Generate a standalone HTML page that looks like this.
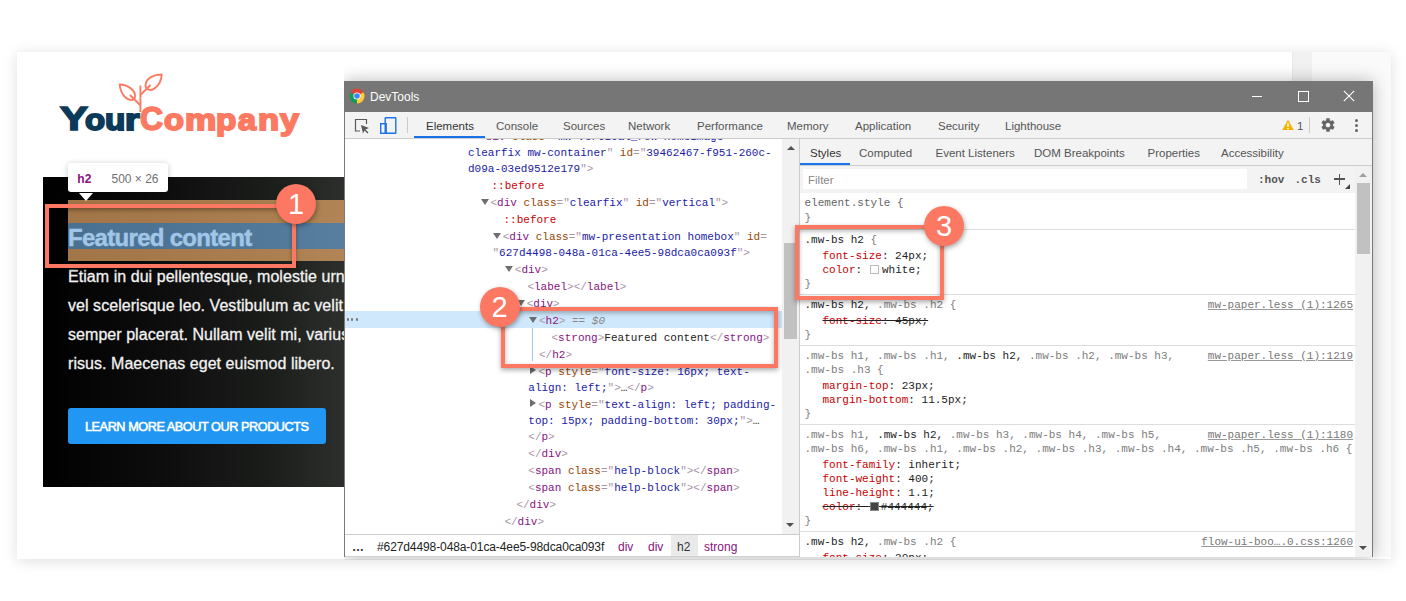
<!DOCTYPE html>
<html><head><meta charset="utf-8"><style>
html,body{margin:0;padding:0;}
body{width:1406px;height:601px;overflow:hidden;position:relative;background:#fff;}
.t{position:absolute;white-space:pre;line-height:20px;}
.clip{position:absolute;left:0;top:0;width:1406px;height:601px;}
</style></head><body>
<div style="position:absolute;left:17px;top:52px;width:1374px;height:507px;background:#fff;box-shadow:0 2px 14px rgba(0,0,0,0.13);"></div><div style="position:absolute;left:1292px;top:52px;width:1px;height:505px;background:#e8e8e8;"></div><div style="position:absolute;left:1293px;top:52px;width:19px;height:505px;background:#f1f1f1;"></div><div style="position:absolute;left:1312px;top:52px;width:79px;height:505px;background:#fafafa;"></div>
<div class="clip" style="clip-path:inset(0 1062px 0 0)"><svg style="position:absolute;left:110px;top:68px" width="65" height="50" viewBox="0 0 65 50" fill="none" stroke="#fb7a62" stroke-width="1.9" stroke-linecap="round" stroke-linejoin="round">
<path d="M9.6,16.5 C17,16.5 26,22 25,29 C24,33 19,33 15,29 C11,25 10,20 9.6,16.5 Z"/>
<path d="M51.7,6.5 C44,6.5 36,10 35.5,17 C35.5,22 41,23.5 45,20 C49,17 51.5,12 51.7,6.5 Z"/>
<path d="M30.4,17.5 L30.4,44" stroke-linecap="butt"/>
<path d="M20.4,27.5 L29.6,36.5"/>
<path d="M40,17.5 L30.8,26.7"/>
</svg><div class="t" style="left:59.60px;top:109.20px;font-family:'Liberation Sans', sans-serif;font-size:33px;font-weight:700;color:#0d3a59;-webkit-text-stroke:1.6px #0d3a59;transform:scaleX(1.266);transform-origin:0 0;">Y</div><div class="t" style="left:84.66px;top:110.05px;font-family:'Liberation Sans', sans-serif;font-size:30px;font-weight:700;color:#0d3a59;-webkit-text-stroke:1.9px #0d3a59;transform:scaleX(1.096);transform-origin:0 0;">o</div><div class="t" style="left:105.19px;top:110.05px;font-family:'Liberation Sans', sans-serif;font-size:30px;font-weight:700;color:#0d3a59;-webkit-text-stroke:1.9px #0d3a59;transform:scaleX(1.105);transform-origin:0 0;">u</div><div class="t" style="left:124.93px;top:110.05px;font-family:'Liberation Sans', sans-serif;font-size:30px;font-weight:700;color:#0d3a59;-webkit-text-stroke:1.9px #0d3a59;transform:scaleX(1.238);transform-origin:0 0;">r</div><div class="t" style="left:140.47px;top:109.20px;font-family:'Liberation Sans', sans-serif;font-size:33px;font-weight:700;color:#fc7a62;-webkit-text-stroke:1.6px #fc7a62;transform:scaleX(0.967);transform-origin:0 0;">C</div><div class="t" style="left:164.36px;top:110.05px;font-family:'Liberation Sans', sans-serif;font-size:30px;font-weight:700;color:#fc7a62;-webkit-text-stroke:1.9px #fc7a62;transform:scaleX(1.085);transform-origin:0 0;">o</div><div class="t" style="left:184.60px;top:110.05px;font-family:'Liberation Sans', sans-serif;font-size:30px;font-weight:700;color:#fc7a62;-webkit-text-stroke:1.9px #fc7a62;transform:scaleX(1.172);transform-origin:0 0;">m</div><div class="t" style="left:216.06px;top:110.05px;font-family:'Liberation Sans', sans-serif;font-size:30px;font-weight:700;color:#fc7a62;-webkit-text-stroke:1.9px #fc7a62;transform:scaleX(1.105);transform-origin:0 0;">p</div><div class="t" style="left:237.88px;top:110.05px;font-family:'Liberation Sans', sans-serif;font-size:30px;font-weight:700;color:#fc7a62;-webkit-text-stroke:1.9px #fc7a62;transform:scaleX(1.078);transform-origin:0 0;">a</div><div class="t" style="left:258.32px;top:110.05px;font-family:'Liberation Sans', sans-serif;font-size:30px;font-weight:700;color:#fc7a62;-webkit-text-stroke:1.9px #fc7a62;transform:scaleX(1.147);transform-origin:0 0;">n</div><div class="t" style="left:280.31px;top:110.05px;font-family:'Liberation Sans', sans-serif;font-size:30px;font-weight:700;color:#fc7a62;-webkit-text-stroke:1.9px #fc7a62;transform:scaleX(1.127);transform-origin:0 0;">y</div><div style="position:absolute;left:43px;top:177px;width:301px;height:310px;background:linear-gradient(to right,#000 0%,#0d0d0d 40%,#1b1d1b 75%,#2c2f2c 100%);"></div><div class="t" style="left:68px;top:227.5px;font-family:'Liberation Sans', sans-serif;font-size:24px;font-weight:700;color:#fff;letter-spacing:-0.7px;-webkit-text-stroke:0.4px #fff;">Featured content</div><div style="position:absolute;left:68px;top:200px;width:276px;height:23px;background:rgba(246,178,107,0.66);"></div><div style="position:absolute;left:68px;top:223px;width:276px;height:26px;background:rgba(111,168,220,0.66);"></div><div style="position:absolute;left:68px;top:249px;width:276px;height:11.5px;background:rgba(246,178,107,0.66);"></div><div class="t" style="left:68px;top:267px;font-family:'Liberation Sans', sans-serif;font-size:16px;font-weight:400;color:#f2f2f2;letter-spacing:0.05px;-webkit-text-stroke:0.3px #f2f2f2;">Etiam in dui pellentesque, molestie urna</div><div class="t" style="left:68px;top:296px;font-family:'Liberation Sans', sans-serif;font-size:16px;font-weight:400;color:#f2f2f2;letter-spacing:0.05px;-webkit-text-stroke:0.3px #f2f2f2;">vel scelerisque leo. Vestibulum ac velit</div><div class="t" style="left:68px;top:325px;font-family:'Liberation Sans', sans-serif;font-size:16px;font-weight:400;color:#f2f2f2;letter-spacing:0.05px;-webkit-text-stroke:0.3px #f2f2f2;">semper placerat. Nullam velit mi, varius</div><div class="t" style="left:68px;top:354px;font-family:'Liberation Sans', sans-serif;font-size:16px;font-weight:400;color:#f2f2f2;letter-spacing:0.05px;-webkit-text-stroke:0.3px #f2f2f2;">risus. Maecenas eget euismod libero.</div><div style="position:absolute;left:68px;top:408px;width:258px;height:36px;background:#2196f3;border-radius:3px;"></div><div class="t" style="left:85px;top:417px;font-family:'Liberation Sans', sans-serif;font-size:12.7px;font-weight:400;color:#fff;letter-spacing:-0.45px;-webkit-text-stroke:0.55px #fff;">LEARN MORE ABOUT OUR PRODUCTS</div><div style="position:absolute;left:68px;top:163px;width:100px;height:29px;background:#fff;border-radius:3px;box-shadow:0 1px 6px rgba(0,0,0,0.22);"></div><div style="position:absolute;left:79px;top:193px;width:0;height:0;border-left:7.5px solid transparent;border-right:7.5px solid transparent;border-top:8px solid #fff;"></div><div class="t" style="left:77.3px;top:168.5px;font-family:'Liberation Sans', sans-serif;font-size:12px;font-weight:700;color:#881280;">h2</div><div class="t" style="left:111.5px;top:168.5px;font-family:'Liberation Sans', sans-serif;font-size:12px;font-weight:400;color:#707070;">500 × 26</div><div style="position:absolute;left:45px;top:204px;width:243px;height:56px;border:4px solid #fc7862;box-shadow:0 2px 4px rgba(0,0,0,0.35), inset 0 2px 4px rgba(0,0,0,0.35);"></div></div>
<div style="position:absolute;left:344px;top:81px;width:1029px;height:476px;background:#fff;box-shadow:0 0 16px rgba(0,0,0,0.28);clip-path:inset(-30px -30px -3px 0);"></div><div style="position:absolute;left:344px;top:81px;width:1029px;height:31px;background:#767676;"></div><div style="position:absolute;left:344px;top:112px;width:1px;height:445px;background:#7a7a7a;"></div><div style="position:absolute;left:1372px;top:112px;width:1px;height:445px;background:#7a7a7a;"></div><div style="position:absolute;left:345px;top:556px;width:1027px;height:1px;background:#d0d0d0;"></div><svg style="position:absolute;left:349px;top:88px" width="16" height="16" viewBox="0 0 16 16">
<circle cx="8" cy="8" r="7.5" fill="#db4437"/>
<path d="M8,8 L1.5,4.25 A7.5,7.5 0 0 0 8,15.5 Z" fill="#0f9d58"/>
<path d="M8,8 L8,15.5 A7.5,7.5 0 0 0 14.5,4.25 Z" fill="#ffcd40"/>
<circle cx="8" cy="8" r="3.6" fill="#fff"/>
<circle cx="8" cy="8" r="2.8" fill="#4285f4"/>
</svg><div class="t" style="left:370px;top:87px;font-family:'Liberation Sans', sans-serif;font-size:12px;font-weight:400;color:#ffffff;">DevTools</div><div style="position:absolute;left:1252px;top:96px;width:10px;height:1px;background:#fff;"></div><div style="position:absolute;left:1298px;top:91px;width:9px;height:9px;border:1px solid #fff;"></div><svg style="position:absolute;left:1343px;top:90px" width="12" height="12" viewBox="0 0 12 12" stroke="#fff" stroke-width="1.1"><path d="M0.8,0.8 L11.2,11.2 M11.2,0.8 L0.8,11.2"/></svg><div style="position:absolute;left:345px;top:112px;width:1027px;height:26px;background:#f3f3f3;"></div><div style="position:absolute;left:345px;top:138px;width:1027px;height:1px;background:#cccccc;"></div><svg style="position:absolute;left:354px;top:118px" width="16" height="16" viewBox="0 0 16 16" fill="none" stroke="#5a5a5a" stroke-width="1.2"><path d="M6,13 H1.5 V1.5 H12.5 V6"/><path d="M7,7 L15,10 L11.5,11.5 L14.5,14.5 L13.5,15.5 L10.5,12.5 L9,15.5 Z" fill="#5a5a5a" stroke="none"/></svg><svg style="position:absolute;left:380px;top:117px" width="17" height="17" viewBox="0 0 17 17" fill="none" stroke="#1a73e8" stroke-width="1.4"><rect x="5.2" y="0.7" width="10.6" height="15.6" rx="0.5"/><rect x="0.7" y="6.7" width="5.5" height="9.6"/></svg><div style="position:absolute;left:407px;top:117px;width:1px;height:16px;background:#cccccc;"></div><div class="t" style="left:426px;top:116px;font-family:'Liberation Sans', sans-serif;font-size:11.5px;font-weight:400;color:#333333;">Elements</div><div class="t" style="left:496px;top:116px;font-family:'Liberation Sans', sans-serif;font-size:11.5px;font-weight:400;color:#555555;">Console</div><div class="t" style="left:563px;top:116px;font-family:'Liberation Sans', sans-serif;font-size:11.5px;font-weight:400;color:#555555;">Sources</div><div class="t" style="left:628px;top:116px;font-family:'Liberation Sans', sans-serif;font-size:11.5px;font-weight:400;color:#555555;">Network</div><div class="t" style="left:697px;top:116px;font-family:'Liberation Sans', sans-serif;font-size:11.5px;font-weight:400;color:#555555;">Performance</div><div class="t" style="left:787px;top:116px;font-family:'Liberation Sans', sans-serif;font-size:11.5px;font-weight:400;color:#555555;">Memory</div><div class="t" style="left:855px;top:116px;font-family:'Liberation Sans', sans-serif;font-size:11.5px;font-weight:400;color:#555555;">Application</div><div class="t" style="left:938px;top:116px;font-family:'Liberation Sans', sans-serif;font-size:11.5px;font-weight:400;color:#555555;">Security</div><div class="t" style="left:1005px;top:116px;font-family:'Liberation Sans', sans-serif;font-size:11.5px;font-weight:400;color:#555555;">Lighthouse</div><div style="position:absolute;left:414px;top:136px;width:71px;height:2px;background:#1a73e8;"></div><svg style="position:absolute;left:1282px;top:119px" width="12" height="12" viewBox="0 0 12 12"><path d="M6,0.5 L11.7,11 H0.3 Z" fill="#f4b400"/><rect x="5.3" y="4" width="1.4" height="4" fill="#fff"/><rect x="5.3" y="9" width="1.4" height="1.3" fill="#fff"/></svg><div class="t" style="left:1297px;top:116px;font-family:'Liberation Sans', sans-serif;font-size:11.5px;font-weight:400;color:#555;">1</div><div style="position:absolute;left:1309px;top:117px;width:1px;height:16px;background:#cccccc;"></div><svg style="position:absolute;left:1320px;top:117px" width="16" height="16" viewBox="0 0 24 24"><path fill="#666666" d="M19.43 12.98c.04-.32.07-.64.07-.98s-.03-.66-.07-.98l2.11-1.65c.19-.15.24-.42.12-.64l-2-3.46c-.12-.22-.39-.3-.61-.22l-2.49 1c-.52-.4-1.08-.73-1.69-.98l-.38-2.65C14.46 2.18 14.25 2 14 2h-4c-.25 0-.46.18-.49.42l-.38 2.65c-.61.25-1.17.59-1.69.98l-2.49-1c-.23-.09-.49 0-.61.22l-2 3.46c-.13.22-.07.49.12.64l2.11 1.65c-.04.32-.07.65-.07.98s.03.66.07.98l-2.11 1.65c-.19.15-.24.42-.12.64l2 3.46c.12.22.39.3.61.22l2.49-1c.52.4 1.08.73 1.69.98l.38 2.65c.03.24.24.42.49.42h4c.25 0 .46-.18.49-.42l.38-2.65c.61-.25 1.17-.59 1.69-.98l2.49 1c.23.09.49 0 .61-.22l2-3.46c.12-.22.07-.49-.12-.64l-2.11-1.65zM12 15.5c-1.93 0-3.5-1.57-3.5-3.5s1.57-3.5 3.5-3.5 3.5 1.57 3.5 3.5-1.57 3.5-3.5 3.5z"/></svg><div style="position:absolute;left:1355px;top:119px;width:3px;height:3px;background:#666;border-radius:50%;"></div><div style="position:absolute;left:1355px;top:124px;width:3px;height:3px;background:#666;border-radius:50%;"></div><div style="position:absolute;left:1355px;top:129px;width:3px;height:3px;background:#666;border-radius:50%;"></div><div style="position:absolute;left:345px;top:139px;width:437px;height:395px;background:#fff;"></div><div style="position:absolute;left:782px;top:139px;width:17px;height:395px;background:#f1f1f1;"></div><div style="position:absolute;left:784px;top:243px;width:13px;height:96px;background:#c1c1c1;"></div><div style="position:absolute;left:787px;top:146px;width:0;height:0;border-left:4px solid transparent;border-right:4px solid transparent;border-bottom:4px solid #505050;"></div><div style="position:absolute;left:786px;top:523px;width:0;height:0;border-left:4px solid transparent;border-right:4px solid transparent;border-top:4px solid #505050;"></div><div style="position:absolute;left:799px;top:139px;width:1px;height:418px;background:#cccccc;"></div><div style="position:absolute;left:345px;top:311px;width:437px;height:17px;background:#cfe8fc;"></div><div style="position:absolute;left:346.8px;top:318.4px;width:2.4px;height:2.4px;background:#777;border-radius:50%;"></div><div style="position:absolute;left:351.1px;top:318.4px;width:2.4px;height:2.4px;background:#777;border-radius:50%;"></div><div style="position:absolute;left:355.5px;top:318.4px;width:2.4px;height:2.4px;background:#777;border-radius:50%;"></div><div style="position:absolute;left:532px;top:328px;width:1px;height:33px;background:#a3c3e6;"></div>
<div class="clip" style="clip-path:inset(139px 624px 67px 346px)"><div class="t" style="left:479px;top:127px;font-family:'Liberation Mono', monospace;font-size:11px;font-weight:400;color:#222;"><span style="color:#a894a6">&lt;</span><span style="color:#881280">div</span><span style="color:#994500"> class</span><span style="color:#a894a6">=&quot;</span><span style="color:#1a1aa6">mw-vertical_row homeimage</span></div><div class="t" style="left:468px;top:143px;font-family:'Liberation Mono', monospace;font-size:11px;font-weight:400;color:#222;"><span style="color:#1a1aa6">clearfix mw-container</span><span style="color:#a894a6">&quot;</span><span style="color:#994500"> id</span><span style="color:#a894a6">=&quot;</span><span style="color:#1a1aa6">39462467-f951-260c-</span></div><div class="t" style="left:468px;top:159px;font-family:'Liberation Mono', monospace;font-size:11px;font-weight:400;color:#222;"><span style="color:#1a1aa6">d09a-03ed9512e179</span><span style="color:#a894a6">&quot;</span><span style="color:#a894a6">&gt;</span></div><div class="t" style="left:491.5px;top:176px;font-family:'Liberation Mono', monospace;font-size:11px;font-weight:400;color:#222;"><span style="color:#c80000">::before</span></div><div class="t" style="left:490.5px;top:193px;font-family:'Liberation Mono', monospace;font-size:11px;font-weight:400;color:#222;"><span style="color:#a894a6">&lt;</span><span style="color:#881280">div</span><span style="color:#994500"> class</span><span style="color:#a894a6">=&quot;</span><span style="color:#1a1aa6">clearfix</span><span style="color:#a894a6">&quot;</span><span style="color:#994500"> id</span><span style="color:#a894a6">=&quot;</span><span style="color:#1a1aa6">vertical</span><span style="color:#a894a6">&quot;</span><span style="color:#a894a6">&gt;</span></div><div style="position:absolute;left:480.5px;top:199px;width:0;height:0;border-left:4px solid transparent;border-right:4px solid transparent;border-top:6px solid #6e6e6e;"></div><div class="t" style="left:503.5px;top:210px;font-family:'Liberation Mono', monospace;font-size:11px;font-weight:400;color:#222;"><span style="color:#c80000">::before</span></div><div class="t" style="left:502.7px;top:227px;font-family:'Liberation Mono', monospace;font-size:11px;font-weight:400;color:#222;"><span style="color:#a894a6">&lt;</span><span style="color:#881280">div</span><span style="color:#994500"> class</span><span style="color:#a894a6">=&quot;</span><span style="color:#1a1aa6">mw-presentation homebox</span><span style="color:#a894a6">&quot;</span><span style="color:#994500"> id</span><span style="color:#a894a6">=</span></div><div style="position:absolute;left:492.7px;top:233px;width:0;height:0;border-left:4px solid transparent;border-right:4px solid transparent;border-top:6px solid #6e6e6e;"></div><div class="t" style="left:492.5px;top:243px;font-family:'Liberation Mono', monospace;font-size:11px;font-weight:400;color:#222;"><span style="color:#a894a6">&quot;</span><span style="color:#1a1aa6">627d4498-048a-01ca-4ee5-98dca0ca093f</span><span style="color:#a894a6">&quot;</span><span style="color:#a894a6">&gt;</span></div><div class="t" style="left:514.8px;top:260px;font-family:'Liberation Mono', monospace;font-size:11px;font-weight:400;color:#222;"><span style="color:#a894a6">&lt;</span><span style="color:#881280">div</span><span style="color:#a894a6">&gt;</span></div><div style="position:absolute;left:504.79999999999995px;top:266px;width:0;height:0;border-left:4px solid transparent;border-right:4px solid transparent;border-top:6px solid #6e6e6e;"></div><div class="t" style="left:527.4px;top:277px;font-family:'Liberation Mono', monospace;font-size:11px;font-weight:400;color:#222;"><span style="color:#a894a6">&lt;</span><span style="color:#881280">label</span><span style="color:#a894a6">&gt;</span><span style="color:#a894a6">&lt;/</span><span style="color:#881280">label</span><span style="color:#a894a6">&gt;</span></div><div class="t" style="left:526.7px;top:294px;font-family:'Liberation Mono', monospace;font-size:11px;font-weight:400;color:#222;"><span style="color:#a894a6">&lt;</span><span style="color:#881280">div</span><span style="color:#a894a6">&gt;</span></div><div style="position:absolute;left:516.7px;top:300px;width:0;height:0;border-left:4px solid transparent;border-right:4px solid transparent;border-top:6px solid #6e6e6e;"></div><div class="t" style="left:539px;top:311px;font-family:'Liberation Mono', monospace;font-size:11px;font-weight:400;color:#222;"><span style="color:#a894a6">&lt;</span><span style="color:#881280">h2</span><span style="color:#a894a6">&gt;</span><span style="color:#888;font-style:italic"> == $0</span></div><div style="position:absolute;left:529px;top:317px;width:0;height:0;border-left:4px solid transparent;border-right:4px solid transparent;border-top:6px solid #6e6e6e;"></div><div class="t" style="left:551.5px;top:328px;font-family:'Liberation Mono', monospace;font-size:11px;font-weight:400;color:#222;"><span style="color:#a894a6">&lt;</span><span style="color:#881280">strong</span><span style="color:#a894a6">&gt;</span><span style="color:#222">Featured content</span><span style="color:#a894a6">&lt;/</span><span style="color:#881280">strong</span><span style="color:#a894a6">&gt;</span></div><div class="t" style="left:539px;top:345px;font-family:'Liberation Mono', monospace;font-size:11px;font-weight:400;color:#222;"><span style="color:#a894a6">&lt;/</span><span style="color:#881280">h2</span><span style="color:#a894a6">&gt;</span></div><div class="t" style="left:538.5px;top:362px;font-family:'Liberation Mono', monospace;font-size:11px;font-weight:400;color:#222;"><span style="color:#a894a6">&lt;</span><span style="color:#881280">p</span><span style="color:#994500"> style</span><span style="color:#a894a6">=&quot;</span><span style="color:#1a1aa6">font-size: 16px; text-</span></div><div style="position:absolute;left:529.5px;top:366px;width:0;height:0;border-top:4px solid transparent;border-bottom:4px solid transparent;border-left:6px solid #6e6e6e;"></div><div class="t" style="left:528.3px;top:378px;font-family:'Liberation Mono', monospace;font-size:11px;font-weight:400;color:#222;"><span style="color:#1a1aa6">align: left;</span><span style="color:#a894a6">&quot;</span><span style="color:#a894a6">&gt;</span><span style="color:#222">…</span><span style="color:#a894a6">&lt;/</span><span style="color:#881280">p</span><span style="color:#a894a6">&gt;</span></div><div class="t" style="left:538.5px;top:395px;font-family:'Liberation Mono', monospace;font-size:11px;font-weight:400;color:#222;"><span style="color:#a894a6">&lt;</span><span style="color:#881280">p</span><span style="color:#994500"> style</span><span style="color:#a894a6">=&quot;</span><span style="color:#1a1aa6">text-align: left; padding-</span></div><div style="position:absolute;left:529.5px;top:399px;width:0;height:0;border-top:4px solid transparent;border-bottom:4px solid transparent;border-left:6px solid #6e6e6e;"></div><div class="t" style="left:528.3px;top:411px;font-family:'Liberation Mono', monospace;font-size:11px;font-weight:400;color:#222;"><span style="color:#1a1aa6">top: 15px; padding-bottom: 30px;</span><span style="color:#a894a6">&quot;</span><span style="color:#a894a6">&gt;</span><span style="color:#222">…</span></div><div class="t" style="left:528.3px;top:427px;font-family:'Liberation Mono', monospace;font-size:11px;font-weight:400;color:#222;"><span style="color:#a894a6">&lt;/</span><span style="color:#881280">p</span><span style="color:#a894a6">&gt;</span></div><div class="t" style="left:528.3px;top:444px;font-family:'Liberation Mono', monospace;font-size:11px;font-weight:400;color:#222;"><span style="color:#a894a6">&lt;/</span><span style="color:#881280">div</span><span style="color:#a894a6">&gt;</span></div><div class="t" style="left:528.3px;top:461px;font-family:'Liberation Mono', monospace;font-size:11px;font-weight:400;color:#222;"><span style="color:#a894a6">&lt;</span><span style="color:#881280">span</span><span style="color:#994500"> class</span><span style="color:#a894a6">=&quot;</span><span style="color:#1a1aa6">help-block</span><span style="color:#a894a6">&quot;</span><span style="color:#a894a6">&gt;</span><span style="color:#a894a6">&lt;/</span><span style="color:#881280">span</span><span style="color:#a894a6">&gt;</span></div><div class="t" style="left:528.3px;top:478px;font-family:'Liberation Mono', monospace;font-size:11px;font-weight:400;color:#222;"><span style="color:#a894a6">&lt;</span><span style="color:#881280">span</span><span style="color:#994500"> class</span><span style="color:#a894a6">=&quot;</span><span style="color:#1a1aa6">help-block</span><span style="color:#a894a6">&quot;</span><span style="color:#a894a6">&gt;</span><span style="color:#a894a6">&lt;/</span><span style="color:#881280">span</span><span style="color:#a894a6">&gt;</span></div><div class="t" style="left:516.4px;top:495px;font-family:'Liberation Mono', monospace;font-size:11px;font-weight:400;color:#222;"><span style="color:#a894a6">&lt;/</span><span style="color:#881280">div</span><span style="color:#a894a6">&gt;</span></div><div class="t" style="left:504.4px;top:512px;font-family:'Liberation Mono', monospace;font-size:11px;font-weight:400;color:#222;"><span style="color:#a894a6">&lt;/</span><span style="color:#881280">div</span><span style="color:#a894a6">&gt;</span></div></div>
<div class="clip" style="clip-path:inset(0 0 44px 0)"><div style="position:absolute;left:345px;top:534px;width:454px;height:1px;background:#cccccc;"></div><div style="position:absolute;left:345px;top:535px;width:454px;height:21px;background:#fff;"></div><div class="t" style="left:352px;top:537px;font-family:'Liberation Sans', sans-serif;font-size:12px;font-weight:700;color:#333;">…</div><div class="t" style="left:377px;top:537px;font-family:'Liberation Sans', sans-serif;font-size:12px;font-weight:400;color:#222;letter-spacing:-0.1px;">#627d4498-048a-01ca-4ee5-98dca0ca093f</div><div style="position:absolute;left:671px;top:535px;width:27px;height:21px;background:#eaeaea;"></div><div class="t" style="left:618px;top:537px;font-family:'Liberation Sans', sans-serif;font-size:12px;font-weight:400;color:#881280;">div</div><div class="t" style="left:648px;top:537px;font-family:'Liberation Sans', sans-serif;font-size:12px;font-weight:400;color:#881280;">div</div><div class="t" style="left:677px;top:537px;font-family:'Liberation Sans', sans-serif;font-size:12px;font-weight:400;color:#333;">h2</div><div class="t" style="left:704px;top:537px;font-family:'Liberation Sans', sans-serif;font-size:12px;font-weight:400;color:#881280;">strong</div><div style="position:absolute;left:800px;top:139px;width:572px;height:26px;background:#f3f3f3;"></div><div style="position:absolute;left:800px;top:165px;width:572px;height:1px;background:#cccccc;"></div><div class="t" style="left:810px;top:143px;font-family:'Liberation Sans', sans-serif;font-size:11.5px;font-weight:400;color:#333;">Styles</div><div class="t" style="left:859px;top:143px;font-family:'Liberation Sans', sans-serif;font-size:11.5px;font-weight:400;color:#555;">Computed</div><div class="t" style="left:935.5px;top:143px;font-family:'Liberation Sans', sans-serif;font-size:11.5px;font-weight:400;color:#555;">Event Listeners</div><div class="t" style="left:1034px;top:143px;font-family:'Liberation Sans', sans-serif;font-size:11.5px;font-weight:400;color:#555;">DOM Breakpoints</div><div class="t" style="left:1147.5px;top:143px;font-family:'Liberation Sans', sans-serif;font-size:11.5px;font-weight:400;color:#555;">Properties</div><div class="t" style="left:1221px;top:143px;font-family:'Liberation Sans', sans-serif;font-size:11.5px;font-weight:400;color:#555;">Accessibility</div><div style="position:absolute;left:800px;top:163px;width:50px;height:2px;background:#1a73e8;"></div><div style="position:absolute;left:800px;top:166px;width:555px;height:27px;background:#f3f3f3;"></div><div style="position:absolute;left:803px;top:169px;width:444px;height:20px;background:#fff;"></div><div class="t" style="left:808px;top:170px;font-family:'Liberation Sans', sans-serif;font-size:11.5px;font-weight:400;color:#8a8a8a;">Filter</div><div class="t" style="left:1258px;top:170px;font-family:'Liberation Mono', monospace;font-size:11px;font-weight:700;color:#555;">:hov</div><div class="t" style="left:1294.5px;top:170px;font-family:'Liberation Mono', monospace;font-size:11px;font-weight:700;color:#555;">.cls</div><div style="position:absolute;left:1334px;top:178px;width:11px;height:1.6px;background:#555;"></div><div style="position:absolute;left:1338.7px;top:173.5px;width:1.6px;height:11px;background:#555;"></div><div style="position:absolute;left:1345px;top:184px;width:0;height:0;border-left:5px solid transparent;border-bottom:5px solid #444;"></div><div style="position:absolute;left:800px;top:193px;width:555px;height:364px;background:#fff;"></div><div style="position:absolute;left:1355px;top:166px;width:17px;height:391px;background:#f1f1f1;"></div><div style="position:absolute;left:1357px;top:183px;width:13px;height:71px;background:#c1c1c1;"></div><div style="position:absolute;left:1359px;top:173px;width:0;height:0;border-left:4px solid transparent;border-right:4px solid transparent;border-bottom:4px solid #a0a0a0;"></div><div style="position:absolute;left:1359px;top:546px;width:0;height:0;border-left:4px solid transparent;border-right:4px solid transparent;border-top:4px solid #505050;"></div><div class="t" style="left:804.5px;top:193px;font-family:'Liberation Mono', monospace;font-size:11px;font-weight:400;color:#222;"><span style="color:#666">element.style {</span></div><div class="t" style="left:804.5px;top:208px;font-family:'Liberation Mono', monospace;font-size:11px;font-weight:400;color:#222;"><span style="color:#777">}</span></div><div style="position:absolute;left:800px;top:229px;width:555px;height:1px;background:#dddddd;"></div><div class="t" style="left:804.5px;top:230px;font-family:'Liberation Mono', monospace;font-size:11px;font-weight:400;color:#222;"><span style="color:#222">.mw-bs h2 </span><span style="color:#7c7c7c">{</span></div><div class="t" style="left:822.5px;top:245.5px;font-family:'Liberation Mono', monospace;font-size:11px;font-weight:400;color:#222;"><span style="color:#c80000">font-size</span><span style="color:#222">: 24px;</span></div><div class="t" style="left:822.5px;top:259.5px;font-family:'Liberation Mono', monospace;font-size:11px;font-weight:400;color:#222;"><span style="color:#c80000">color</span><span style="color:#222">: </span></div><div class="t" style="left:882px;top:259.5px;font-family:'Liberation Mono', monospace;font-size:11px;font-weight:400;color:#222;">white;</div><div style="position:absolute;left:870px;top:265px;width:9px;height:9px;border:1px solid #bbb;box-sizing:border-box;background:#fff;"></div><div class="t" style="left:804.5px;top:273.5px;font-family:'Liberation Mono', monospace;font-size:11px;font-weight:400;color:#222;"><span style="color:#7c7c7c">}</span></div><div style="position:absolute;left:800px;top:294px;width:555px;height:1px;background:#dddddd;"></div><div class="t" style="left:804.5px;top:295px;font-family:'Liberation Mono', monospace;font-size:11px;font-weight:400;color:#222;"><span style="color:#222">.mw-bs h2,</span><span style="color:#7c7c7c"> .mw-bs .h2 {</span></div><div class="t" style="left:1207.8px;top:295px;font-family:'Liberation Mono', monospace;font-size:11px;font-weight:400;color:#777;text-decoration:underline;text-decoration-color:#999;">mw-paper.less (1):1265</div><div class="t" style="left:822.5px;top:311px;font-family:'Liberation Mono', monospace;font-size:11px;font-weight:400;color:#222;text-decoration:line-through;text-decoration-color:#222;"><span style="color:#c80000">font-size</span><span style="color:#222">: 45px;</span></div><div class="t" style="left:804.5px;top:325px;font-family:'Liberation Mono', monospace;font-size:11px;font-weight:400;color:#222;"><span style="color:#7c7c7c">}</span></div><div style="position:absolute;left:800px;top:345px;width:555px;height:1px;background:#dddddd;"></div><div class="t" style="left:804.5px;top:346px;font-family:'Liberation Mono', monospace;font-size:11px;font-weight:400;color:#222;"><span style="color:#7c7c7c">.mw-bs h1, .mw-bs .h1, </span><span style="color:#222">.mw-bs h2,</span><span style="color:#7c7c7c"> .mw-bs .h2, .mw-bs h3,</span></div><div class="t" style="left:1207.8px;top:346px;font-family:'Liberation Mono', monospace;font-size:11px;font-weight:400;color:#777;text-decoration:underline;text-decoration-color:#999;">mw-paper.less (1):1219</div><div class="t" style="left:804.5px;top:360px;font-family:'Liberation Mono', monospace;font-size:11px;font-weight:400;color:#222;"><span style="color:#7c7c7c">.mw-bs .h3 {</span></div><div class="t" style="left:822.5px;top:376px;font-family:'Liberation Mono', monospace;font-size:11px;font-weight:400;color:#222;"><span style="color:#c80000">margin-top</span><span style="color:#222">: 23px;</span></div><div class="t" style="left:822.5px;top:390px;font-family:'Liberation Mono', monospace;font-size:11px;font-weight:400;color:#222;"><span style="color:#c80000">margin-bottom</span><span style="color:#222">: 11.5px;</span></div><div class="t" style="left:804.5px;top:404px;font-family:'Liberation Mono', monospace;font-size:11px;font-weight:400;color:#222;"><span style="color:#7c7c7c">}</span></div><div style="position:absolute;left:800px;top:424px;width:555px;height:1px;background:#dddddd;"></div><div class="t" style="left:804.5px;top:425px;font-family:'Liberation Mono', monospace;font-size:11px;font-weight:400;color:#222;"><span style="color:#7c7c7c">.mw-bs h1, </span><span style="color:#222">.mw-bs h2,</span><span style="color:#7c7c7c"> .mw-bs h3, .mw-bs h4, .mw-bs h5,</span></div><div class="t" style="left:1207.8px;top:425px;font-family:'Liberation Mono', monospace;font-size:11px;font-weight:400;color:#777;text-decoration:underline;text-decoration-color:#999;">mw-paper.less (1):1180</div><div class="t" style="left:804.5px;top:439px;font-family:'Liberation Mono', monospace;font-size:11px;font-weight:400;color:#222;"><span style="color:#7c7c7c">.mw-bs h6, .mw-bs .h1, .mw-bs .h2, .mw-bs .h3, .mw-bs .h4, .mw-bs .h5, .mw-bs .h6 {</span></div><div class="t" style="left:822.5px;top:455px;font-family:'Liberation Mono', monospace;font-size:11px;font-weight:400;color:#222;"><span style="color:#c80000">font-family</span><span style="color:#222">: inherit;</span></div><div class="t" style="left:822.5px;top:469px;font-family:'Liberation Mono', monospace;font-size:11px;font-weight:400;color:#222;"><span style="color:#c80000">font-weight</span><span style="color:#222">: 400;</span></div><div class="t" style="left:822.5px;top:483px;font-family:'Liberation Mono', monospace;font-size:11px;font-weight:400;color:#222;"><span style="color:#c80000">line-height</span><span style="color:#222">: 1.1;</span></div><div class="t" style="left:822.5px;top:497px;font-family:'Liberation Mono', monospace;font-size:11px;font-weight:400;color:#222;text-decoration:line-through;text-decoration-color:#222;"><span style="color:#c80000">color</span><span style="color:#222">: </span><span style="color:#222">  #444444;</span></div><div style="position:absolute;left:870px;top:502px;width:9px;height:9px;background:#444;border:1px solid #888;box-sizing:border-box;"></div><div class="t" style="left:804.5px;top:511px;font-family:'Liberation Mono', monospace;font-size:11px;font-weight:400;color:#222;"><span style="color:#7c7c7c">}</span></div><div style="position:absolute;left:800px;top:531px;width:555px;height:1px;background:#dddddd;"></div><div class="t" style="left:804.5px;top:532px;font-family:'Liberation Mono', monospace;font-size:11px;font-weight:400;color:#222;"><span style="color:#222">.mw-bs h2,</span><span style="color:#7c7c7c"> .mw-bs .h2 {</span></div><div class="t" style="left:1201.2px;top:532px;font-family:'Liberation Mono', monospace;font-size:11px;font-weight:400;color:#777;text-decoration:underline;text-decoration-color:#999;">flow-ui-boo….0.css:1260</div><div class="t" style="left:822.5px;top:548px;font-family:'Liberation Mono', monospace;font-size:11px;font-weight:400;color:#222;"><span style="color:#c80000">font-size</span><span style="color:#222">: 30px;</span></div></div>
<div style="position:absolute;left:501px;top:307px;width:269px;height:53px;border:4px solid #fc7862;box-shadow:0 2px 5px rgba(0,0,0,0.35), inset 0 2px 5px rgba(0,0,0,0.3);"></div><div style="position:absolute;left:795px;top:225px;width:141px;height:67px;border:4px solid #fc7862;box-shadow:0 2px 5px rgba(0,0,0,0.35), inset 0 2px 5px rgba(0,0,0,0.3);"></div><div style="position:absolute;left:276px;top:184px;width:40px;height:40px;border-radius:50%;background:#fc7862;box-shadow:1px 2px 5px rgba(0,0,0,0.35);"></div><div class="t" style="left:276px;top:184px;width:40px;height:40px;line-height:40px;text-align:center;font-family:Liberation Sans;font-size:29px;color:#fff;">1</div><div style="position:absolute;left:479.5px;top:287px;width:40px;height:40px;border-radius:50%;background:#fc7862;box-shadow:1px 2px 5px rgba(0,0,0,0.35);"></div><div class="t" style="left:479.5px;top:287px;width:40px;height:40px;line-height:40px;text-align:center;font-family:Liberation Sans;font-size:29px;color:#fff;">2</div><div style="position:absolute;left:924px;top:205.5px;width:40px;height:40px;border-radius:50%;background:#fc7862;box-shadow:1px 2px 5px rgba(0,0,0,0.35);"></div><div class="t" style="left:924px;top:205.5px;width:40px;height:40px;line-height:40px;text-align:center;font-family:Liberation Sans;font-size:29px;color:#fff;">3</div>
</body></html>
